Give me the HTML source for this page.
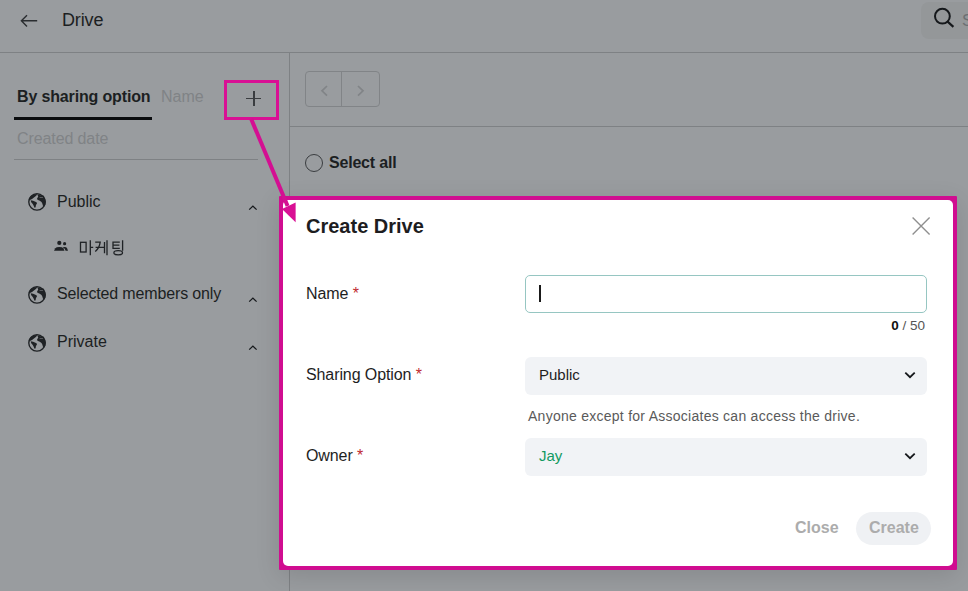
<!DOCTYPE html>
<html><head><meta charset="utf-8">
<style>
*{margin:0;padding:0;box-sizing:border-box}
html,body{width:968px;height:591px;overflow:hidden;background:#999c9f;font-family:"Liberation Sans",sans-serif}
.a{position:absolute;white-space:nowrap}
.hline{position:absolute;height:1px;background:#7e8184}
.vline{position:absolute;width:1px;background:#7e8184}
.txt{color:#1c1f22}
.gray{color:#808386}
svg{position:absolute;overflow:visible}
</style></head><body>
<!-- header -->
<svg style="left:0px;top:0px" width="50" height="40" viewBox="0 0 50 40"><path d="M37.2 20.8H21.6M27 15.2L21.4 20.8L27 26.4" fill="none" stroke="#2a2d30" stroke-width="1.4"/></svg>
<div class="a txt" style="left:62px;top:10px;font-size:18px;letter-spacing:-0.15px">Drive</div>
<div class="a" style="left:921px;top:2px;width:60px;height:37px;border-radius:8px;background:#949799"></div>
<svg style="left:933px;top:7px" width="22" height="22" viewBox="0 0 22 22"><circle cx="9.4" cy="9.2" r="7.4" fill="none" stroke="#15181b" stroke-width="2"/><path d="M14.6 14.6L20.4 19.9" stroke="#15181b" stroke-width="2.1"/></svg>
<div class="a" style="left:962px;top:11px;font-size:17px;color:#6c6f72">S</div>
<div class="hline" style="left:0;top:52px;width:968px"></div>
<div class="vline" style="left:289px;top:53px;height:538px"></div>

<!-- sidebar -->
<div class="a txt" style="left:17px;top:88px;font-size:16px;font-weight:bold;letter-spacing:-0.15px">By sharing option</div>
<div class="a" style="left:14px;top:117px;width:138px;height:2.5px;background:#0b0d0f"></div>
<div class="a gray" style="left:161px;top:88px;font-size:16px">Name</div>
<div class="a" style="left:246px;top:98px;width:15px;height:1.4px;background:#3a3d40"></div>
<div class="a" style="left:253.2px;top:91px;width:1.4px;height:15px;background:#3a3d40"></div>
<div class="a gray" style="left:17px;top:130px;font-size:16px;letter-spacing:-0.1px">Created date</div>
<div class="hline" style="left:14px;top:159px;width:244px"></div>

<svg style="left:27px;top:192px" width="20" height="20" viewBox="0 0 591 591">
<circle cx="295" cy="295" r="242" fill="none" stroke="#1f2225" stroke-width="40"/>
<path fill="#1f2225" d="M60 235L80 150L150 85L290 60L290 92L262 120L225 148L185 178L150 205L115 225L90 240Z M310 80L500 110L555 280L545 370L505 440L470 400L452 340L428 295L378 262L308 232L298 182L332 140Z M108 245L180 256L250 285L295 315L290 350L265 385L255 440L235 472L212 445L198 410L170 355L125 305Z"/>
<path fill="#999c9f" d="M370 148L470 160L475 175L375 165Z"/>
</svg>
<div class="a txt" style="left:57px;top:193px;font-size:16px">Public</div>
<svg style="left:248px;top:205px" width="10" height="6" viewBox="0 0 10 6"><path d="M1.2 4.6L4.9 1.1L8.6 4.6" fill="none" stroke="#16191c" stroke-width="1.3"/></svg>

<svg style="left:54px;top:240px" width="15" height="12" viewBox="0 0 15 12">
<circle cx="5.3" cy="2.9" r="2.1" fill="#1f2225"/><circle cx="10.6" cy="3.7" r="1.6" fill="#1f2225"/>
<path d="M0 10.8L1.3 8.3Q2.2 7.1 5.3 7.1Q8.4 7.1 9.3 8.3L10.5 10.8Z" fill="#1f2225"/>
<path d="M8.6 7Q9.5 6.9 10.6 6.9Q12.4 7 13 8L14 10.8H11.6L10.5 8.5Z" fill="#1f2225"/>
</svg>
<svg style="left:79px;top:239px" width="46" height="18" viewBox="0 0 46 18" fill="none" stroke="#1f2225" stroke-width="1.3">
<rect x="1.5" y="3.3" width="5.6" height="9.7"/>
<path d="M11.3 1.3V16.3M11.3 8.4H14.2"/>
<path d="M16.2 3.2H21.2Q20.4 9 16.3 12.6M16.6 8.3H25.5M25.5 3V14.3M28 1.3V16.3"/>
<path d="M40.8 3.2H34V9.3H40.8M34 6.1H40.4M43.6 1.3V11.8"/>
<ellipse cx="39.2" cy="13.8" rx="4.3" ry="2.1"/>
</svg>

<svg style="left:27px;top:285px" width="20" height="20" viewBox="0 0 591 591">
<circle cx="295" cy="295" r="242" fill="none" stroke="#1f2225" stroke-width="40"/>
<path fill="#1f2225" d="M60 235L80 150L150 85L290 60L290 92L262 120L225 148L185 178L150 205L115 225L90 240Z M310 80L500 110L555 280L545 370L505 440L470 400L452 340L428 295L378 262L308 232L298 182L332 140Z M108 245L180 256L250 285L295 315L290 350L265 385L255 440L235 472L212 445L198 410L170 355L125 305Z"/>
<path fill="#999c9f" d="M370 148L470 160L475 175L375 165Z"/>
</svg>
<div class="a txt" style="left:57px;top:285px;font-size:16px;letter-spacing:-0.15px">Selected members only</div>
<svg style="left:248px;top:297px" width="10" height="6" viewBox="0 0 10 6"><path d="M1.2 4.6L4.9 1.1L8.6 4.6" fill="none" stroke="#16191c" stroke-width="1.3"/></svg>

<svg style="left:27px;top:333px" width="20" height="20" viewBox="0 0 591 591">
<circle cx="295" cy="295" r="242" fill="none" stroke="#1f2225" stroke-width="40"/>
<path fill="#1f2225" d="M60 235L80 150L150 85L290 60L290 92L262 120L225 148L185 178L150 205L115 225L90 240Z M310 80L500 110L555 280L545 370L505 440L470 400L452 340L428 295L378 262L308 232L298 182L332 140Z M108 245L180 256L250 285L295 315L290 350L265 385L255 440L235 472L212 445L198 410L170 355L125 305Z"/>
<path fill="#999c9f" d="M370 148L470 160L475 175L375 165Z"/>
</svg>
<div class="a txt" style="left:57px;top:333px;font-size:16px">Private</div>
<svg style="left:248px;top:345px" width="10" height="6" viewBox="0 0 10 6"><path d="M1.2 4.6L4.9 1.1L8.6 4.6" fill="none" stroke="#16191c" stroke-width="1.3"/></svg>

<!-- right pane -->
<div class="a" style="left:305px;top:71px;width:75px;height:36px;border:1px solid #818487;border-radius:4px"></div>
<div class="vline" style="left:341px;top:72px;height:34px;background:#818487"></div>
<svg style="left:320px;top:84.5px" width="8" height="12" viewBox="0 0 8 12"><path d="M7 1L2 5.8L7 10.6" fill="none" stroke="#818487" stroke-width="1.7"/></svg>
<svg style="left:357px;top:84.5px" width="8" height="12" viewBox="0 0 8 12"><path d="M1 1L6 5.8L1 10.6" fill="none" stroke="#818487" stroke-width="1.7"/></svg>
<div class="hline" style="left:290px;top:126px;width:678px"></div>
<div class="a" style="left:305px;top:154px;width:18px;height:18px;border:1px solid #3a3d40;border-radius:50%"></div>
<div class="a txt" style="left:329px;top:154px;font-size:16px;font-weight:bold;letter-spacing:-0.2px">Select all</div>

<!-- modal -->
<div class="a" style="left:279px;top:196px;width:678px;height:374px;background:#d00d90;border-radius:1px;box-shadow:0 6px 24px rgba(0,0,0,0.12)"></div><div class="a" style="left:283px;top:200px;width:670px;height:366px;background:#fff;border-radius:5px"></div>
<div class="a" style="left:306px;top:215px;font-size:20px;font-weight:bold;color:#1d1d1f">Create Drive</div>
<svg style="left:912px;top:217px" width="18" height="18" viewBox="0 0 18 18"><path d="M0.6 0.6L17.6 17.6M17.6 0.6L0.6 17.6" stroke="#8f8f8f" stroke-width="1.4"/></svg>
<div class="a" style="left:306px;top:285px;font-size:16px;color:#1e1e1e;letter-spacing:-0.1px">Name <span style="color:#bf2a2f">*</span></div>
<div class="a" style="left:524.5px;top:275px;width:402.5px;height:37.5px;border:1px solid #96c6c2;border-radius:5px"></div>
<div class="a" style="left:538.5px;top:285px;width:2px;height:17px;background:#1a1a1a"></div>
<div class="a" style="right:43px;top:318px;font-size:13.5px;color:#555"><b style="color:#111">0</b> / 50</div>
<div class="a" style="left:306px;top:366px;font-size:16px;color:#1e1e1e;letter-spacing:-0.1px">Sharing Option <span style="color:#bf2a2f">*</span></div>
<div class="a" style="left:525px;top:356.5px;width:402px;height:38.5px;background:#f1f3f6;border-radius:6px"></div>
<div class="a" style="left:539px;top:366px;font-size:15px;color:#1e1e1e">Public</div>
<svg style="left:904.3px;top:370.6px" width="12" height="8" viewBox="0 0 12 8"><path d="M1.3 1.6L6 6.2L10.7 1.6" fill="none" stroke="#15181b" stroke-width="1.8"/></svg>
<div class="a" style="left:528px;top:408px;font-size:14px;color:#5a5a5a;letter-spacing:0.26px">Anyone except for Associates can access the drive.</div>
<div class="a" style="left:306px;top:447px;font-size:16px;color:#1e1e1e;letter-spacing:-0.1px">Owner <span style="color:#bf2a2f">*</span></div>
<div class="a" style="left:525px;top:437.5px;width:402px;height:38.5px;background:#f1f3f6;border-radius:6px"></div>
<div class="a" style="left:539px;top:447px;font-size:15px;color:#129a62">Jay</div>
<svg style="left:904.3px;top:451.6px" width="12" height="8" viewBox="0 0 12 8"><path d="M1.3 1.6L6 6.2L10.7 1.6" fill="none" stroke="#15181b" stroke-width="1.8"/></svg>
<div class="a" style="left:795px;top:519px;font-size:16px;font-weight:bold;color:#acacac">Close</div>
<div class="a" style="left:855.5px;top:511.5px;width:75px;height:33.5px;border-radius:17px;background:#eff1f4"></div>
<div class="a" style="left:869px;top:519px;font-size:16px;font-weight:bold;color:#acacac">Create</div>

<!-- annotation -->
<div class="a" style="left:223.5px;top:80px;width:55px;height:40px;border:3.5px solid #d91094"></div>
<svg style="left:0;top:0" width="968" height="591" viewBox="0 0 968 591">
<path d="M251.2 119L287.6 206" stroke="#d40f92" stroke-width="4"/>
<path d="M282 209L295.6 202.6L295.6 222.3Z" fill="#d91094"/>
</svg>
</body></html>
